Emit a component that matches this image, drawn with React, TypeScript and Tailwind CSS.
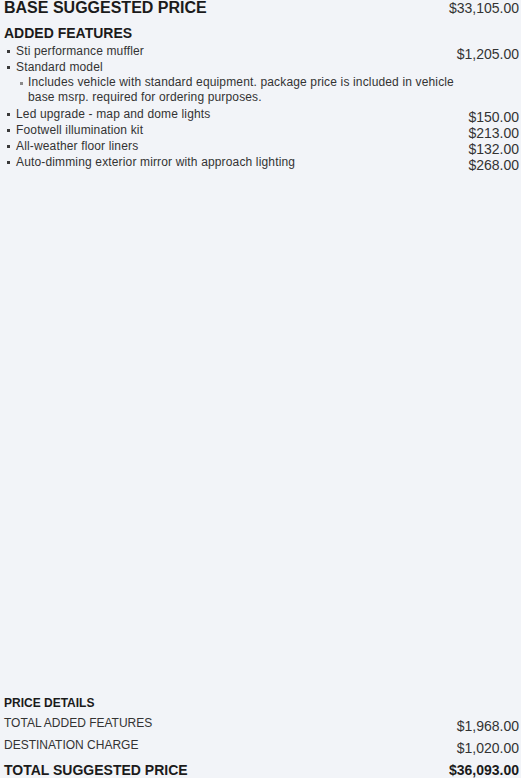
import React from 'react'

type Feature = {
  name: string
  price?: string
  notes?: string[]
}

const features: Feature[] = [
  { name: 'Sti performance muffler', price: '$1,205.00' },
  {
    name: 'Standard model',
    notes: [
      'Includes vehicle with standard equipment. package price is included in vehicle base msrp. required for ordering purposes.',
    ],
  },
  { name: 'Led upgrade - map and dome lights', price: '$150.00' },
  { name: 'Footwell illumination kit', price: '$213.00' },
  { name: 'All-weather floor liners', price: '$132.00' },
  { name: 'Auto-dimming exterior mirror with approach lighting', price: '$268.00' },
]

const Bullet = ({ light }: { light?: boolean }) => (
  <span
    className={
      light
        ? 'inline-block w-[3px] h-[3px] bg-[#8a8a8a] shrink-0 mt-[7px]'
        : 'inline-block w-[3px] h-[3px] bg-[#3a3a3a] shrink-0 mt-[7px]'
    }
  />
)

const App: React.FC = () => {
  return (
    <div className="min-h-screen bg-[#f2f4f8] text-[#333] flex flex-col pl-1 pr-[2px] font-['Liberation_Sans',Arial,sans-serif]">
      {/* Base price */}
      <div className="flex justify-between items-start">
        <h1 className="text-[16px] leading-4 font-bold text-[#1b1b1b]">BASE SUGGESTED PRICE</h1>
        <span className="text-[14px] leading-4">$33,105.00</span>
      </div>

      {/* Added features */}
      <h2 className="mt-[9px] text-[14px] leading-4 font-bold text-[#1b1b1b]">ADDED FEATURES</h2>
      <ul className="mt-[2px]">
        {features.map((f) => (
          <li key={f.name} className={f.notes ? 'mb-px' : ''}>
            <div className="flex justify-between items-start">
              <div className="flex gap-[6px] pl-[3px] text-[12px] leading-4 tracking-[0.15px]">
                <Bullet />
                <span>{f.name}</span>
              </div>
              {f.price && (
                <span className="text-[14px] leading-5 mt-px -mb-[5px]">{f.price}</span>
              )}
            </div>
            {f.notes && (
              <ul className="pl-4 pr-14">
                {f.notes.map((n) => (
                  <li key={n} className="flex gap-[5px] text-[12px] leading-[15px] tracking-[0.15px]">
                    <Bullet light />
                    <span>{n}</span>
                  </li>
                ))}
              </ul>
            )}
          </li>
        ))}
      </ul>

      <div className="flex-1" />

      {/* Price details */}
      <div>
        <h3 className="text-[12px] leading-4 font-bold text-[#1b1b1b]">PRICE DETAILS</h3>
        <div className="mt-1 flex justify-between items-start h-[22px]">
          <span className="text-[12px] leading-4">TOTAL ADDED FEATURES</span>
          <span className="text-[14px] leading-5 mt-px">$1,968.00</span>
        </div>
        <div className="flex justify-between items-start h-[22px]">
          <span className="text-[12px] leading-4">DESTINATION CHARGE</span>
          <span className="text-[14px] leading-5 mt-px">$1,020.00</span>
        </div>
        <div className="mt-[3px] flex justify-between items-center h-4">
          <span className="text-[14px] leading-4 font-bold text-[#1b1b1b]">TOTAL SUGGESTED PRICE</span>
          <span className="text-[14px] leading-4 font-bold text-[#1b1b1b]">$36,093.00</span>
        </div>
      </div>
    </div>
  )
}

export default App
